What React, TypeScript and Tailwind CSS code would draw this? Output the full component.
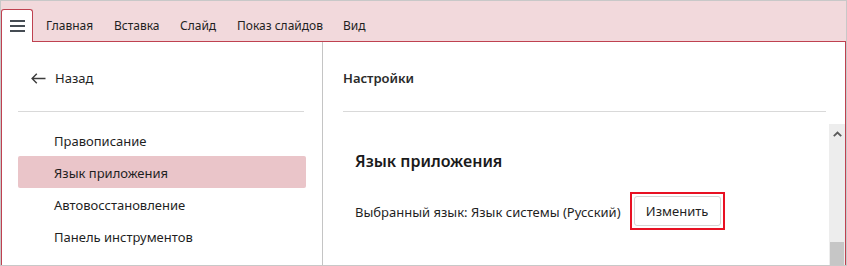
import React from "react";

const font = { fontFamily: '"Noto Sans", "Open Sans", sans-serif' };

function Hamburger() {
  return (
    <svg width="15" height="12" viewBox="0 0 15 12" className="block">
      <rect x="0" y="0" width="15" height="2" fill="#454c53" />
      <rect x="0" y="5" width="15" height="2" fill="#454c53" />
      <rect x="0" y="10" width="15" height="2" fill="#454c53" />
    </svg>
  );
}

function BackArrow() {
  return (
    <svg width="15" height="11" viewBox="0 0 15 11" className="block">
      <path d="M14.5 5.5H1.2M5.8 0.8L1.1 5.5l4.7 4.7" fill="none" stroke="#3c3c3c" strokeWidth="1.4" />
    </svg>
  );
}

function ChevronUp() {
  return (
    <svg width="9" height="6" viewBox="0 0 9 6" className="block">
      <path d="M0.8 5.2L4.5 1.5l3.7 3.7" fill="none" stroke="#5a5a5a" strokeWidth="1.8" />
    </svg>
  );
}

export default function App() {
  const tabs: [string, string][] = [
    ["Главная", "w-[68px]"],
    ["Вставка", "w-[66px]"],
    ["Слайд", "w-[57px]"],
    ["Показ слайдов", "w-[106px]"],
    ["Вид", "w-[60px]"],
  ];
  const items = ["Правописание", "Язык приложения", "Автовосстановление", "Панель инструментов"];
  return (
    <div
      style={font}
      className="w-[847px] h-[266px] border border-[#c8c8c8] bg-white flex flex-col overflow-hidden text-[#1f1f1f]"
    >
      {/* toolbar */}
      <div className="h-[41px] shrink-0 bg-[#f2d9dc] border-b border-[#bf4150] flex items-end">
        <div className="relative z-10 -mb-px w-[32px] h-[33px] bg-white border border-b-0 border-[#bf4150] rounded-t-[3px] flex items-center justify-center">
          <Hamburger />
        </div>
        <div className="flex items-center h-full ml-[13px] text-[12px] pt-[9px]">
          {tabs.map(([t, w]) => (
            <div key={t} className={`${w} leading-none whitespace-nowrap`}>
              {t}
            </div>
          ))}
        </div>
      </div>

      {/* content */}
      <div className="flex-1 flex border-l border-r border-[#bf4150] min-h-0">
        {/* left panel */}
        <div className="w-[321px] shrink-0 border-r border-[#c4c4c4] flex flex-col pt-[20px] text-[13px]">
          <div className="h-[32px] flex items-center pl-[29px]">
            <BackArrow />
            <span className="ml-[9px] pt-[2px]">Назад</span>
          </div>
          <div className="mt-[17px] ml-[16px] w-[286px] h-px bg-[#d9d9d9]" />
          <div className="mt-[12px] flex flex-col">
            {items.map((it, i) => (
              <div
                key={it}
                className={`ml-[16px] w-[288px] h-[32px] flex items-center pl-[36px] pt-[3px] rounded-[2px] ${
                  i === 1 ? "bg-[#eac5c9]" : ""
                }`}
              >
                {it}
              </div>
            ))}
          </div>
        </div>

        {/* right panel */}
        <div className="flex-1 flex flex-col pt-[20px] min-w-0">
          <div className="h-[32px] flex items-center pl-[20px] pt-[2px] text-[13px] font-semibold text-[#2b2b2b]">
            Настройки
          </div>
          <div className="mt-[17px] ml-[20px] w-[483px] h-px bg-[#d9d9d9]" />
          <div className="mt-[12px] flex-1 flex min-h-0">
            <div className="flex-1 pl-[32px] pt-[26px]">
              <div className="text-[16px] font-semibold leading-[23px] text-[#1a1a1a]">Язык приложения</div>
              <div className="mt-[19px] flex items-center text-[13px]">
                <span className="pt-[3px]">Выбранный язык: Язык системы (Русский)</span>
                <div className="ml-[9px] border-2 border-[#e81123] p-[2px]">
                  <div className="w-[87px] h-[30px] border border-[#d6d6d6] rounded-[3px] bg-white flex items-center justify-center pt-[1px]">
                    Изменить
                  </div>
                </div>
              </div>
            </div>
            <div className="w-[16px] shrink-0 bg-[#ededed] flex flex-col">
              <div className="h-[18px] flex items-center justify-center pt-[2px]">
                <ChevronUp />
              </div>
              <div className="flex-1" />
              <div className="h-[23px] mx-px bg-[#c6c6c6]" />
            </div>
          </div>
        </div>
      </div>
    </div>
  );
}
